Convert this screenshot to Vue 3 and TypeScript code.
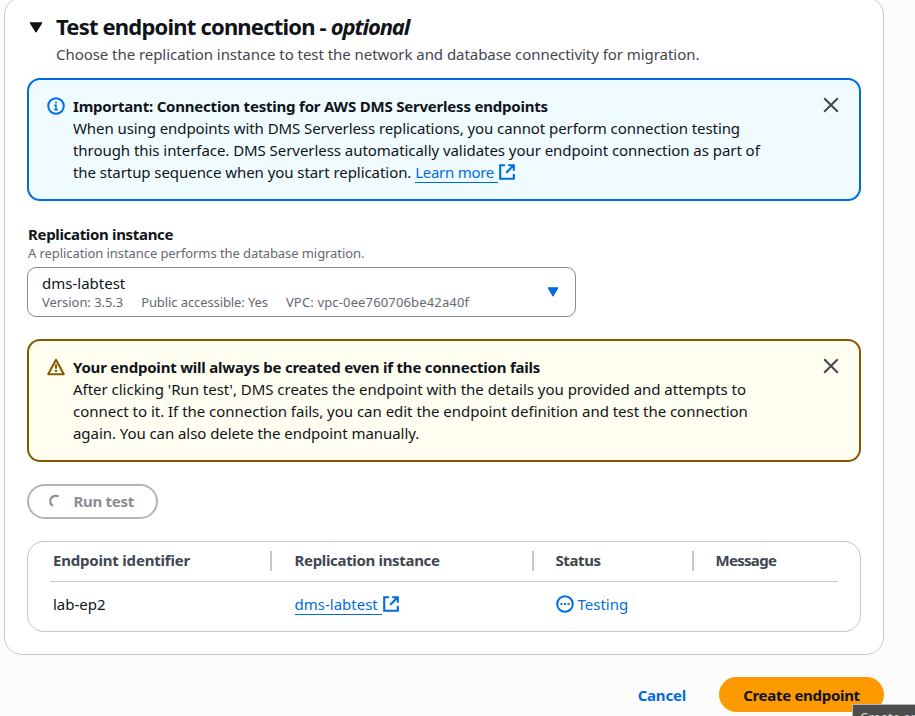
<script setup lang="ts">
interface Detail { label: string; value: string; key: string }

const details: Detail[] = [
  { key: 'version', label: 'Version', value: '3.5.3' },
  { key: 'access', label: 'Public accessible', value: 'Yes' },
  { key: 'vpc', label: 'VPC', value: 'vpc-0ee760706be42a40f' },
]
const columns: { key: string; title: string }[] = [
  { key: 'identifier', title: 'Endpoint identifier' },
  { key: 'instance', title: 'Replication instance' },
  { key: 'state', title: 'Status' },
  { key: 'message', title: 'Message' },
]
</script>

<template>
  <main class="page">
    <section class="panel">
      <header class="heading">
        <svg class="caret" width="14" height="11" viewBox="0 0 14 11"><path d="M1 .8h12L7 10.2z" fill="#0f141a" stroke="#0f141a" stroke-linejoin="round" /></svg>
        <div>
          <h2 class="title">Test endpoint connection - <i>optional</i></h2>
          <p class="subtitle">Choose the replication instance to test the network and database connectivity for migration.</p>
        </div>
      </header>

      <div class="alert info">
        <svg class="alert-icon" width="18" height="18" viewBox="0 0 18 18" fill="none" stroke="#006ce0" stroke-width="2"><circle cx="9" cy="9" r="7.8" /><path d="M9 4.6v1.9M7.2 8.2H9v4.9M7.2 12.7h3.6" stroke-width="1.5" /></svg>
        <div class="alert-body">
          <strong class="t1">Important: Connection testing for AWS DMS Serverless endpoints</strong>
          <span class="t2">When using endpoints with DMS Serverless replications, you cannot perform connection testing</span>
          <span class="t3">through this interface. DMS Serverless automatically validates your endpoint connection as part of</span>
          <span class="t4">the startup sequence when you start replication. <a class="link learn">Learn more&nbsp;</a><svg class="ext" width="16" height="16" viewBox="0 0 16 16" fill="none" stroke="#006ce0" stroke-width="2.1"><path d="M6 1.2H1.2v13.6h13.6V10M9.2 1.2h5.6v5.6M14.2 1.8L7.2 8.8" /></svg></span>
        </div>
        <svg class="close" width="16" height="16" viewBox="0 0 16 16" stroke="#424650" stroke-width="2"><path d="M1.2 1.2l13.6 13.6M14.8 1.2L1.2 14.8" /></svg>
      </div>

      <div class="field">
        <label class="label">Replication instance</label>
        <p class="hint">A replication instance performs the database migration.</p>
        <div class="select">
          <div>
            <div class="select-value">dms-labtest</div>
            <div class="details"><span v-for="d in details" :key="d.key" :class="d.key">{{ d.label }}: {{ d.value }}</span></div>
          </div>
          <svg width="12" height="10" viewBox="0 0 12 10"><path d="M1 .8h10L6 9.2z" fill="#006ce0" stroke="#006ce0" stroke-linejoin="round" /></svg>
        </div>
      </div>

      <div class="alert warning">
        <svg class="alert-icon" width="18" height="18" viewBox="0 0 18 18" fill="none" stroke="#855900" stroke-width="2" stroke-linejoin="round"><path d="M9 1.8L1.2 16.2h15.6z" /><path d="M9 6.2v4.6M9 12v2" /></svg>
        <div class="alert-body">
          <strong class="w1">Your endpoint will always be created even if the connection fails</strong>
          <span class="w2">After clicking 'Run test', DMS creates the endpoint with the details you provided and attempts to</span>
          <span class="w2">connect to it. If the connection fails, you can edit the endpoint definition and test the connection</span>
          <span class="w4">again. You can also delete the endpoint manually.</span>
        </div>
        <svg class="close" width="16" height="16" viewBox="0 0 16 16" stroke="#424650" stroke-width="2"><path d="M1.2 1.2l13.6 13.6M14.8 1.2L1.2 14.8" /></svg>
      </div>

      <button class="run">
        <svg width="18" height="18" viewBox="0 0 18 18" fill="none" stroke="#8c8c94" stroke-width="2"><path d="M12.6 4.6C9.6 2.4 4.4 4.4 4.2 9c0 2.2 1 4 2.6 4.8" /></svg>
        <span>Run test</span>
      </button>

      <div class="table">
        <div class="row head"><div v-for="c in columns" :key="c.key" class="cell" :class="c.key">{{ c.title }}</div></div>
        <div class="row">
          <div class="cell">lab-ep2</div>
          <div class="cell"><a class="link">dms-labtest&nbsp;</a><svg class="ext" width="16" height="16" viewBox="0 0 16 16" fill="none" stroke="#006ce0" stroke-width="2.1"><path d="M6 1.2H1.2v13.6h13.6V10M9.2 1.2h5.6v5.6M14.2 1.8L7.2 8.8" /></svg></div>
          <div class="cell status">
            <svg width="18" height="18" viewBox="0 0 18 18" fill="none" stroke="#006ce0" stroke-width="2"><circle cx="9" cy="9" r="7.8" /><path d="M4.5 9h2M8 9h2M11.5 9h2" /></svg>
            <span>Testing</span>
          </div>
          <div class="cell"></div>
        </div>
      </div>
    </section>

    <footer class="actions">
      <button class="cancel">Cancel</button>
      <button class="create">Create endpoint</button>
    </footer>
    <div class="tooltip">Create endpoint</div>
  </main>
</template>

<style>
body { background: #fcfcfd; }
</style>

<style scoped>
* { box-sizing: border-box; }
.page {
  position: relative;
  width: 915px;
  height: 716px;
  overflow: hidden;
  padding-left: 4px;
  font: 15px/22px "Noto Sans", sans-serif;
  color: #0f141a;
  background: #fcfcfd;
  white-space: nowrap;
}
h2, p { margin: 0; }
svg { flex: none; }
button { font: inherit; font-weight: 700; padding: 0; border: 0; background: none; white-space: nowrap; }
.panel {
  width: 880px;
  height: 658px;
  margin-top: -3px;
  padding: 14px 22px 0;
  border: 1px solid #c6c6cd;
  border-radius: 18px;
  background: #fff;
}
.heading { display: flex; height: 66px; padding-left: 2px; }
.caret { margin: 10px 13px 0 0; }
.title { font-size: 22px; line-height: 28px; letter-spacing: -0.81px; }
.title i { letter-spacing: -1.1px; }
.subtitle { margin-top: 3px; line-height: 22px; color: #424650; letter-spacing: -0.05px; }
.alert {
  display: flex;
  width: 834px;
  height: 123px;
  padding: 15px 20px 0 18px;
  border: 2px solid;
  border-radius: 13px;
}
.info { border-color: #006ce0; background: #f0fbff; }
.warning { margin-top: 22px; border-color: #855900; background: #fffef0; }
.alert-icon { margin: 2px 8px 0 0; }
.alert-body { flex: 1; }
.alert-body > * { display: block; height: 22px; }
.t1, .w1 { letter-spacing: -0.205px; }
.t2 { letter-spacing: -0.08px; }
.t3 { letter-spacing: -0.05px; }
.t4, .w4 { letter-spacing: -0.06px; }
.w2 { letter-spacing: -0.022px; }
.close { margin-top: 2px; }
.link { display: inline-block; height: 22px; line-height: 22px; color: #006ce0; border-bottom: 1px solid #006ce0; vertical-align: top; }
.learn { letter-spacing: -0.27px; }
.ext { margin: 3px 0 0 1px; vertical-align: top; }
.field { margin-top: 22px; }
.label { display: block; padding-left: 1px; font-weight: 700; line-height: 22px; letter-spacing: -0.33px; }
.hint { margin-top: -1px; padding-left: 1px; font-size: 13px; line-height: 18px; color: #656871; letter-spacing: -0.08px; }
.select {
  display: flex;
  align-items: center;
  justify-content: space-between;
  width: 549px;
  height: 50px;
  margin-top: 5px;
  padding: 0 16px 0 14px;
  border: 1px solid #8c8c94;
  border-radius: 9px;
}
.select-value { line-height: 20px; }
.details { display: flex; gap: 18px; font-size: 13px; line-height: 18px; color: #656871; }
.version { letter-spacing: -0.05px; }
.access { letter-spacing: -0.1px; }
.vpc { letter-spacing: 0.15px; }
.run {
  display: flex;
  align-items: center;
  gap: 8px;
  width: 131px;
  height: 35px;
  margin-top: 22px;
  padding: 0 0 2px 18px;
  border: 2px solid #b4b4bb;
  border-radius: 18px;
  color: #8c8c94;
  letter-spacing: -0.3px;
}
.run svg { margin-left: -1px; }
.run span { margin-left: 1.5px; }
.table {
  width: 834px;
  height: 91px;
  margin-top: 22px;
  padding: 0 22px;
  border: 1px solid #c6c6cd;
  border-radius: 17px;
}
.row { display: grid; grid-template-columns: 222px 262px 160px 1fr; height: 49px; align-items: center; }
.row.head { height: 40px; border-bottom: 1px solid #c6c6cd; font-weight: 700; color: #424650; }
.cell { height: 22px; padding-left: 22.5px; }
.cell:first-child { padding-left: 3px; }
.row:not(.head) .cell { margin-top: -5px; }
.head .cell { height: 20px; margin-top: -1px; line-height: 18px; border-right: 2px solid #c6c6cd; }
.head .cell:last-child { border: 0; }
.identifier { letter-spacing: -0.2px; }
.instance { letter-spacing: -0.33px; }
.state { letter-spacing: -0.4px; }
.message { letter-spacing: -0.7px; }
.cell.state, .cell.status, .cell.message { padding-left: 21.5px; }
.status { display: flex; gap: 4px; align-items: flex-start; color: #006ce0; }
.status svg { margin-top: 2px; }
.actions { display: flex; justify-content: flex-end; gap: 33px; width: 880px; margin-top: 22px; }
.cancel { color: #006ce0; letter-spacing: -0.2px; }
.create { width: 165px; height: 35px; border-radius: 18px; color: #0f141a; background: #ff9900; letter-spacing: -0.3px; }
.tooltip {
  position: absolute;
  left: 852px;
  top: 704px;
  width: 100px;
  height: 24px;
  padding: 3px 7px;
  border: 1px solid #b5b5b5;
  color: #d8d8d8;
  background: #4d4d4d;
  font-size: 13px;
  line-height: 18px;
}
</style>
